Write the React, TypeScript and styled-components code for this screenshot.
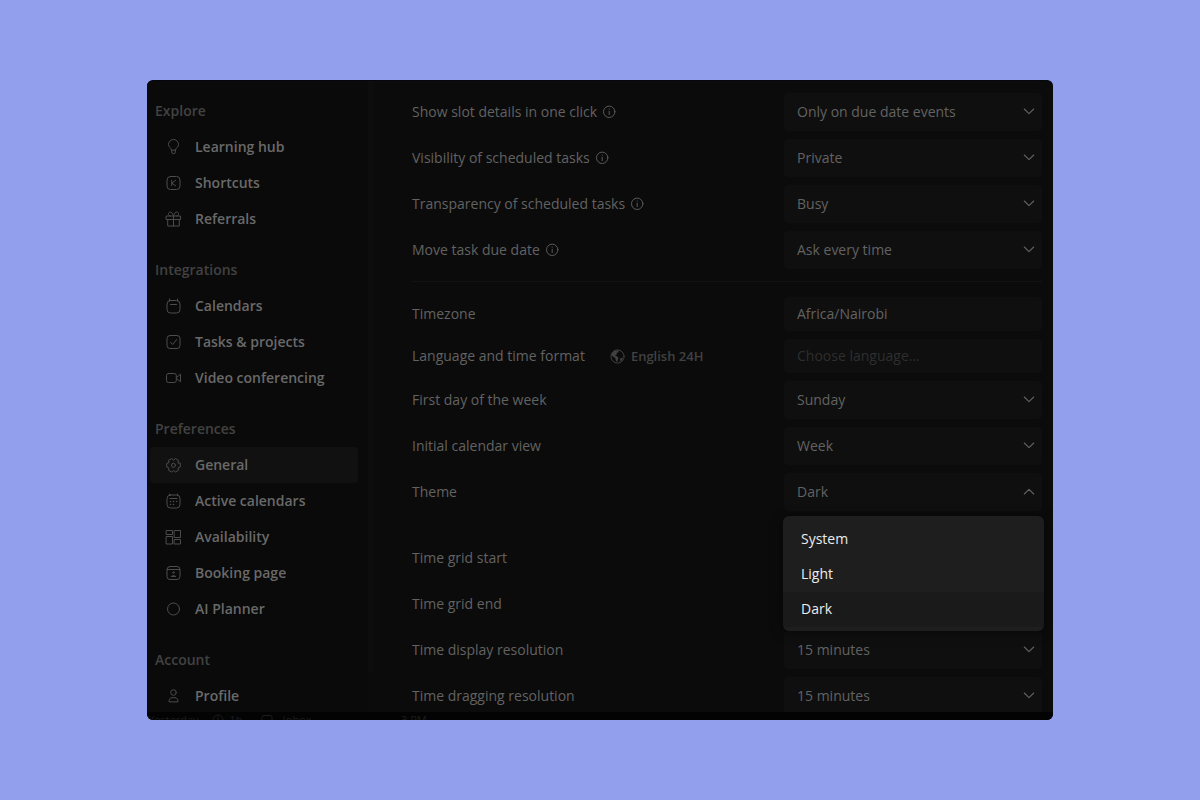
import React, { useId } from "react";
import styled, { createGlobalStyle } from "styled-components";

const GlobalStyle = createGlobalStyle`
  *, *::before, *::after { box-sizing: border-box; }
  body {
    margin: 0;
    background: #929fec;
    font-family: "Open Sans", "Noto Sans", sans-serif;
    font-size: 14px;
    line-height: 20px;
  }
`;

const Page = styled.div`
  min-height: 100vh;
  padding: 80px 147px;
`;

const Panel = styled.div`
  display: flex;
  flex-direction: column;
  height: calc(100vh - 160px);
  min-height: 320px;
  overflow: hidden;
  border-radius: 6px;
  background: #0b0b0b;
  border-top: 1px solid #05070f;
`;

const Body = styled.div`
  display: flex;
  flex: 1;
  min-height: 0;
  overflow: hidden;
`;

const Sidebar = styled.nav`
  display: flex;
  flex: none;
  flex-direction: column;
  gap: 15px;
  width: 221px;
  padding: 12px 10px 0 3px;
  background: #0a0a0a;
`;

const ScrollThumb = styled.div`
  flex: none;
  width: 5px;
  margin-bottom: 40px;
  background: #0d0d0d;
`;

const GroupTitle = styled.h2`
  margin: 0;
  padding: 8px 5px;
  font-size: 14px;
  font-weight: 600;
  line-height: 20px;
  color: #424242;
`;

const NavList = styled.ul`
  margin: 0;
  padding: 0;
  list-style: none;
`;

const NavLink = styled.a<{ $active?: boolean }>`
  display: flex;
  align-items: center;
  gap: 13px;
  height: 36px;
  padding-left: 15px;
  border-radius: 4px;
  background: ${(p) => (p.$active ? "#111111" : "transparent")};
  color: #696969;
  font-weight: 600;
  text-decoration: none;

  svg {
    flex: none;
    color: #4c4c4c;
  }
`;

const Main = styled.main`
  flex: 1;
  min-width: 0;
  padding: 12px 11px 0 39px;
`;

const Section = styled.section<{ $top?: number }>`
  display: grid;
  gap: 8px;
  padding-top: ${(p) => p.$top ?? 0}px;
`;

const Divider = styled.hr`
  height: 1px;
  margin: 12px 0 0;
  border: 0;
  background: #131313;
`;

const Row = styled.div<{ $compact?: boolean }>`
  position: relative;
  display: grid;
  grid-template-columns: minmax(0, 1fr) 258px;
  align-items: center;
  height: ${(p) => (p.$compact ? 34 : 38)}px;
`;

const LabelCell = styled.div`
  display: flex;
  align-items: center;
  gap: 5px;
  color: #626262;
`;

const Info = styled.button`
  display: flex;
  padding: 0;
  border: 0;
  background: none;
  color: #5a5a5a;
`;

const LanguageTag = styled.span`
  display: flex;
  align-items: center;
  gap: 6px;
  margin-left: 20px;
  color: #414141;
  font-size: 13px;
  font-weight: 600;
`;

const ControlBox = styled.div`
  position: relative;
  display: flex;
  height: 100%;
  color: #626262;

  > svg {
    position: absolute;
    right: 6px;
    top: 50%;
    margin-top: -8px;
    pointer-events: none;
  }
`;

const SelectField = styled.select`
  width: 100%;
  padding: 0 30px 0 13px;
  border: 0;
  border-radius: 4px;
  background: #0f0f0f;
  color: #626262;
  font: inherit;
  appearance: none;
`;

const ComboButton = styled.button`
  width: 100%;
  padding: 0 30px 0 13px;
  border: 0;
  border-radius: 4px;
  background: #0f0f0f;
  color: #626262;
  font: inherit;
  text-align: left;
`;

const TextField = styled.input`
  width: 100%;
  padding: 0 13px;
  border: 0;
  border-radius: 4px;
  background: #0f0f0f;
  color: #626262;
  font: inherit;

  &::placeholder {
    color: #2e2e2e;
    opacity: 1;
  }
`;

const Menu = styled.div`
  position: absolute;
  z-index: 2;
  top: calc(100% + 5px);
  left: -1px;
  right: -2px;
  padding: 6px 0 4px;
  overflow: hidden;
  border-radius: 6px;
  background: #1e1e1e;
  box-shadow: 0 2px 12px rgba(0, 0, 0, 0.5);
`;

const Option = styled.div<{ $selected?: boolean }>`
  padding: 7px 18px 8px;
  background: ${(p) => (p.$selected ? "#1a1a1a" : "transparent")};
  color: #ececec;
`;

const Backdrop = styled.div`
  display: flex;
  flex: none;
  height: 8px;
  overflow: hidden;
  background: #030303;
  color: #1c1c1c;
  font-size: 11px;
  line-height: 16px;
`;

const BackdropMeta = styled.div`
  display: flex;
  gap: 13px;
  width: 254px;
  padding-left: 1px;

  span {
    display: flex;
    align-items: center;
    gap: 6px;
    height: 16px;
  }

  span:last-child {
    gap: 10px;
    margin-left: 5px;
  }
`;

type IconProps = { children: React.ReactNode; size?: number; weight?: number; box?: number };

const Icon = ({ children, size = 17, weight = 1, box = 17 }: IconProps) => (
  <svg
    width={size}
    height={size}
    viewBox={`0 0 ${box} ${box}`}
    fill="none"
    stroke="currentColor"
    strokeWidth={weight}
    strokeLinecap="round"
    strokeLinejoin="round"
    aria-hidden="true"
  >
    {children}
  </svg>
);

const icons = {
  bulb: (
    <Icon>
      <path d="M6.500 10.800C6.400 9 3.500 8.200 3.500 5.500a5 5 0 0 1 10 0c0 2.700-2.900 3.500-3 5.300zM6.700 10.800v2.200q0 1.700 1.800 1.700t1.800-1.700v-2.200" />
    </Icon>
  ),
  key: (
    <Icon>
      <rect x="2" y="1.500" width="13" height="13" rx="3.500" />
      <path d="M6.700 5.300v5.400M10.600 5.300 6.900 8.200l3.700 2.500" />
    </Icon>
  ),
  gift: (
    <Icon>
      <path d="M1.500 5h14v3.500h-14zM2.700 8.500V15h11.600V8.500M8.500 5v10M8.500 5C7.500 2 6.500 1 5.200 1 3 1 2.600 5 5.400 5M8.500 5c1-3 2-4 3.300-4 2.200 0 2.600 4-.2 4" />
    </Icon>
  ),
  calendar: (
    <Icon>
      <rect x="2" y="2.500" width="13" height="12.500" rx="3.500" />
      <path d="M4.500 1v1.800M12.500 1v1.800M5.500 6.500h6" />
    </Icon>
  ),
  check: (
    <Icon>
      <rect x="2" y="1.500" width="13" height="13" rx="3" />
      <path d="m5.500 8.200 2.200 2.300 4-5" />
    </Icon>
  ),
  video: (
    <Icon>
      <rect x="1.500" y="3.500" width="9.800" height="9" rx="2" />
      <path d="m11.800 7.200 3.700-3v7.600l-3.700-3" />
    </Icon>
  ),
  gear: (
    <Icon>
      <path d="M15.300 6.600v3.400l-2.200 1 .3 2.300-2.900 1.700-2-1.400-2 1.400-2.900-1.700.3-2.300-2.200-1V6.600l2.200-1-.3-2.300 2.900-1.700 2 1.400 2-1.400 2.900 1.700-.3 2.300z" />
      <circle cx="8.500" cy="8.300" r="2" />
    </Icon>
  ),
  calendarDots: (
    <Icon>
      <rect x="2" y="2" width="13" height="13" rx="3.500" />
      <path d="M4.500 1v1.200M12.500 1v1.200M5 5.500h7" />
      <path d="M5.500 8.500h.1M8.500 8.500h.1M11.500 8.500h.1M5.500 11.500h.1M8.500 11.500h.1" strokeWidth="1.400" />
    </Icon>
  ),
  grid: (
    <Icon>
      <path d="M1.500 1.500h6v4h-6zM9.500 1.500h6v7h-6zM1.500 7.500h6v7.500h-6zM9.500 10.500h6V15h-6z" />
    </Icon>
  ),
  booking: (
    <Icon>
      <rect x="2" y="1.500" width="13" height="13" rx="3" />
      <path d="M2.300 4.500h12.400M6.500 11.200q2-1.700 4 0z" />
      <circle cx="8.500" cy="7.500" r=".8" />
    </Icon>
  ),
  circle: (
    <Icon>
      <circle cx="8.500" cy="8" r="6" />
    </Icon>
  ),
  person: (
    <Icon>
      <circle cx="8.500" cy="4.500" r="2.800" />
      <path d="M4 13.500c0-2 1.200-3.800 3-3.800h3c1.800 0 3 1.800 3 3.800z" />
    </Icon>
  ),
};

const InfoIcon = () => (
  <Icon size={14} box={14}>
    <circle cx="7.200" cy="6.800" r="5.700" />
    <path d="M7.200 6.200v3.400M7.200 4v.2" />
  </Icon>
);

const Chevron = ({ up }: { up?: boolean }) => (
  <Icon size={14} box={14} weight={1.100}>
    <path d={up ? "m2.300 10 4.700-4.700L11.700 10" : "M2.300 5 7 9.700 11.700 5"} />
  </Icon>
);

const Globe = () => (
  <Icon size={15} box={15}>
    <circle cx="7.500" cy="7.500" r="6.600" />
    <path
      d="M2 4.200 4.500 1.700l4.300-.4-.5 2-1.800.9.200 1.500-2 .8 2.300.8 1.500 1.700-.6 1.500-.6 2.700-1.700-2-.1-2-2.300-1.500L1.200 6zM10.200 9.200l2.600-.5-.7 2.300-2 1.600z"
      fill="currentColor"
      stroke="none"
    />
  </Icon>
);

const Clock = () => (
  <Icon size={12} box={12}>
    <circle cx="6" cy="6" r="5" />
    <path d="M6 3v3l2 1" />
  </Icon>
);

const Tray = () => (
  <Icon size={12} box={12}>
    <rect x="1" y="1.500" width="10" height="9" rx="2" />
  </Icon>
);

type IconName = keyof typeof icons;

const groups: { title: string; items: [IconName, string][] }[] = [
  { title: "Explore", items: [["bulb", "Learning hub"], ["key", "Shortcuts"], ["gift", "Referrals"]] },
  {
    title: "Integrations",
    items: [["calendar", "Calendars"], ["check", "Tasks & projects"], ["video", "Video conferencing"]],
  },
  {
    title: "Preferences",
    items: [
      ["gear", "General"],
      ["calendarDots", "Active calendars"],
      ["grid", "Availability"],
      ["booking", "Booking page"],
      ["circle", "AI Planner"],
    ],
  },
  { title: "Account", items: [["person", "Profile"]] },
];

const SelectRow = ({ label, value, info }: { label: string; value: string; info?: boolean }) => {
  const id = useId();
  return (
    <Row>
      <LabelCell>
        <label htmlFor={id}>{label}</label>
        {info && (
          <Info type="button" aria-label={`About: ${label}`}>
            <InfoIcon />
          </Info>
        )}
      </LabelCell>
      <ControlBox>
        <SelectField id={id} defaultValue={value}>
          <option>{value}</option>
        </SelectField>
        <Chevron />
      </ControlBox>
    </Row>
  );
};

export default function App() {
  return (
    <Page>
      <GlobalStyle />
      <Panel>
        <Body>
          <Sidebar aria-label="Settings">
            {groups.map((group) => (
              <div key={group.title}>
                <GroupTitle>{group.title}</GroupTitle>
                <NavList>
                  {group.items.map(([icon, name]) => (
                    <li key={name}>
                      <NavLink href="#" $active={name === "General"}>
                        {icons[icon]}
                        {name}
                      </NavLink>
                    </li>
                  ))}
                </NavList>
              </div>
            ))}
          </Sidebar>
          <ScrollThumb />
          <Main>
            <Section>
              <SelectRow label="Show slot details in one click" value="Only on due date events" info />
              <SelectRow label="Visibility of scheduled tasks" value="Private" info />
              <SelectRow label="Transparency of scheduled tasks" value="Busy" info />
              <SelectRow label="Move task due date" value="Ask every time" info />
            </Section>
            <Divider />
            <Section $top={15}>
              <Row $compact>
                <LabelCell>
                  <label htmlFor="timezone">Timezone</label>
                </LabelCell>
                <ControlBox>
                  <TextField id="timezone" defaultValue="Africa/Nairobi" />
                </ControlBox>
              </Row>
              <Row $compact>
                <LabelCell>
                  <label htmlFor="language">Language and time format</label>
                  <LanguageTag>
                    <Globe />
                    English 24H
                  </LanguageTag>
                </LabelCell>
                <ControlBox>
                  <TextField id="language" placeholder="Choose language..." />
                </ControlBox>
              </Row>
              <SelectRow label="First day of the week" value="Sunday" />
              <SelectRow label="Initial calendar view" value="Week" />
              <Row>
                <LabelCell>
                  <label htmlFor="theme">Theme</label>
                </LabelCell>
                <ControlBox>
                  <ComboButton id="theme" type="button" aria-haspopup="listbox" aria-expanded="true">
                    Dark
                  </ComboButton>
                  <Chevron up />
                  <Menu role="listbox" aria-label="Theme">
                    <Option role="option" aria-selected="false">System</Option>
                    <Option role="option" aria-selected="false">Light</Option>
                    <Option role="option" aria-selected="true" $selected>Dark</Option>
                  </Menu>
                </ControlBox>
              </Row>
            </Section>
            <Section $top={28}>
              <Row>
                <LabelCell>Time grid start</LabelCell>
              </Row>
              <Row>
                <LabelCell>Time grid end</LabelCell>
              </Row>
              <SelectRow label="Time display resolution" value="15 minutes" />
              <SelectRow label="Time dragging resolution" value="15 minutes" />
            </Section>
          </Main>
        </Body>
        <Backdrop aria-hidden="true">
          <BackdropMeta>
            <span>Yesterday</span>
            <span>
              <Clock />
              1h
            </span>
            <span>
              <Tray />
              Inbox
            </span>
          </BackdropMeta>
          <span>3 PM</span>
        </Backdrop>
      </Panel>
    </Page>
  );
}
